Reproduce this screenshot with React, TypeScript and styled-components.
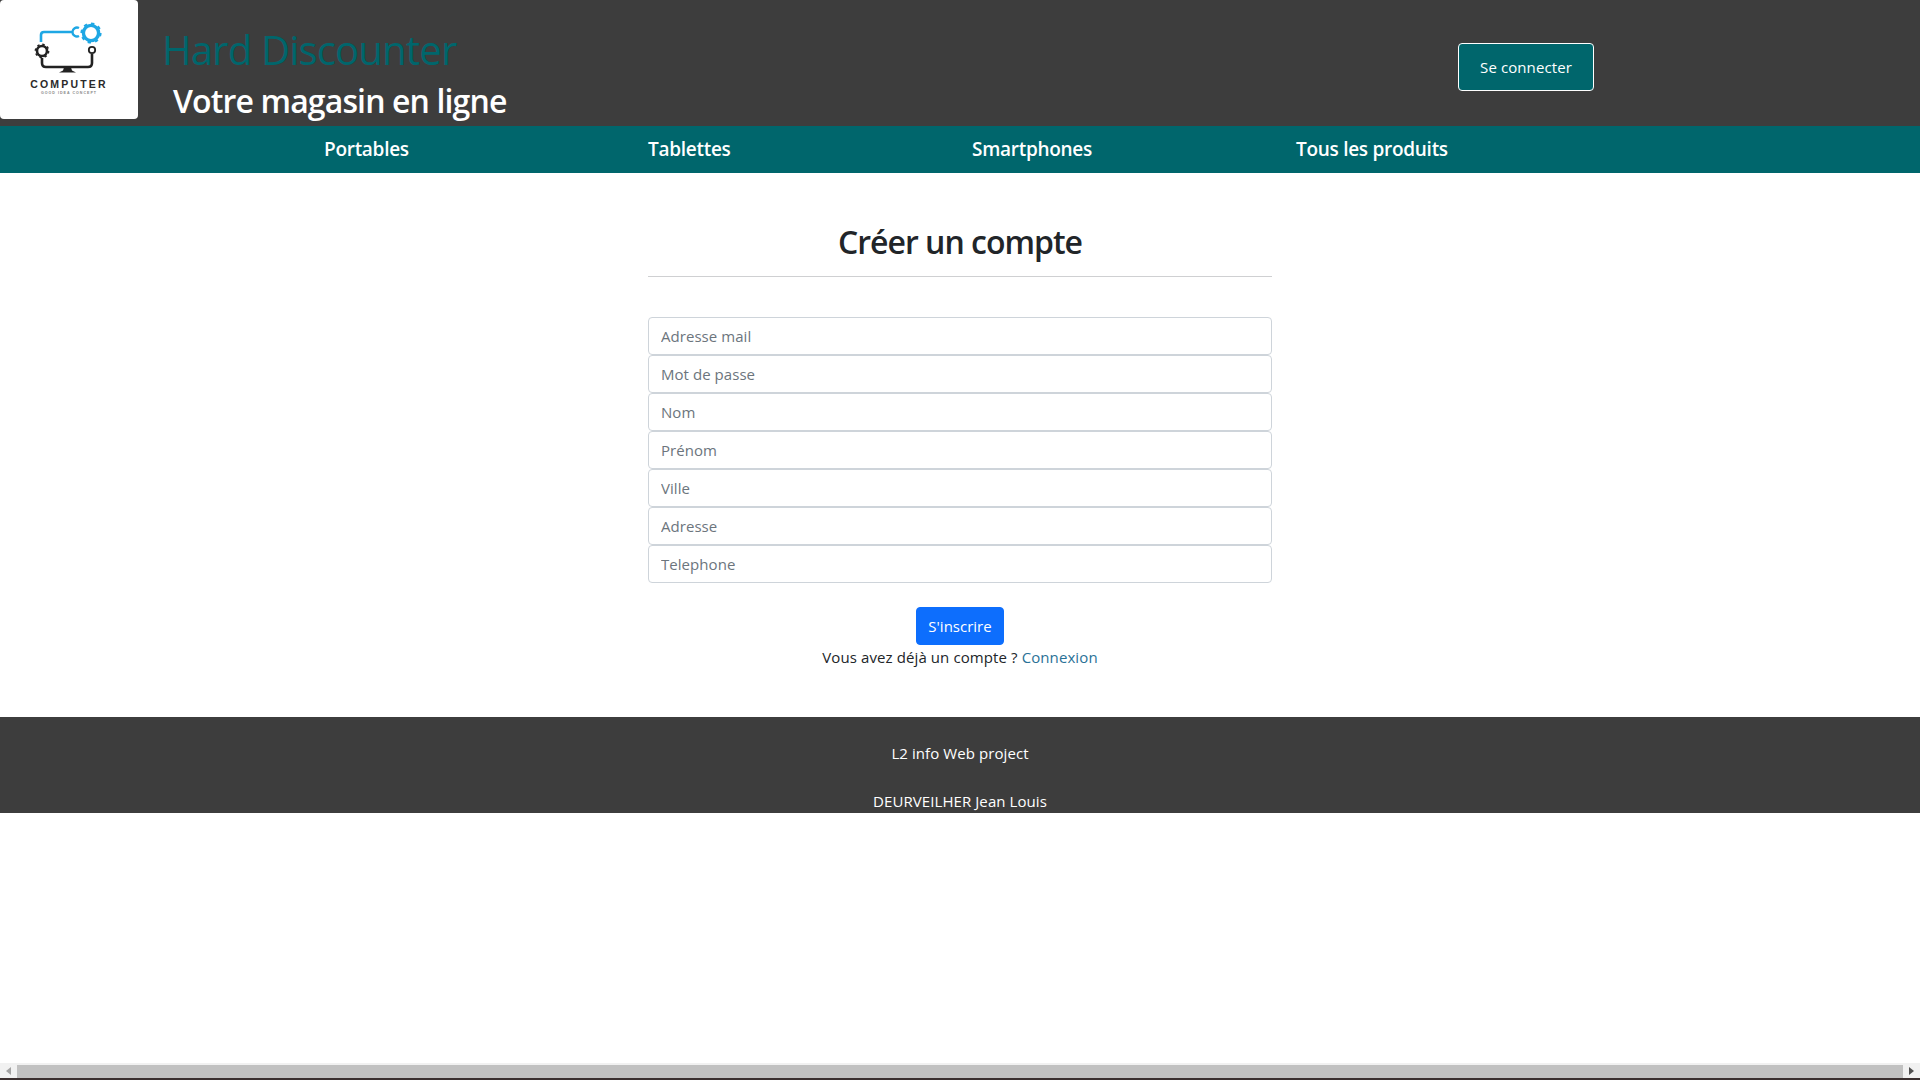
import React from "react";
import styled, { createGlobalStyle } from "styled-components";

const GlobalStyle = createGlobalStyle`
  html, body {
    margin: 0;
    padding: 0;
    height: 100%;
    overflow: hidden;
  }
  * {
    box-sizing: border-box;
  }
  body {
    background-color: #fff;
    color: #212529;
    font-family: "Open Sans", "Noto Sans", sans-serif;
    font-size: 16px;
    line-height: 24px;
  }
`;

const Page = styled.div`
  display: flex;
  flex-direction: column;
  height: 1080px;
  width: 1920px;
  overflow: hidden;
`;

const TopBar = styled.header`
  display: flex;
  align-items: flex-start;
  height: 126px;
  background-color: #3d3d3d;
`;

const LogoBox = styled.div`
  width: 138px;
  height: 119px;
  background-color: #fff;
  border-radius: 4px;
  flex-shrink: 0;
`;

const TitleBlock = styled.div`
  margin-left: 24px;
  padding-top: 26px;
`;

const SiteName = styled.h1`
  margin: 0;
  color: #00666c;
  font-size: 40px;
  line-height: 48px;
  font-weight: 400;
  letter-spacing: -0.8px;
`;

const Tagline = styled.h2`
  margin: 8px 0 0 11px;
  color: #fff;
  font-size: 32px;
  line-height: 38px;
  font-weight: 600;
  letter-spacing: -0.87px;
`;

const LoginButton = styled.button`
  margin: 43px 326px 0 auto;
  width: 136px;
  height: 48px;
  padding: 0;
  background-color: #00666c;
  color: #fff;
  border: 1px solid #fff;
  border-radius: 4px;
  font-family: inherit;
  font-size: 15px;
  letter-spacing: 0.1px;
`;

const NavBar = styled.nav`
  display: grid;
  grid-template-columns: repeat(4, 324px);
  height: 47px;
  padding: 0 0 1px 324px;
  align-items: center;
  background-color: #00666c;
`;

const NavLink = styled.a`
  color: #fff;
  font-size: 19px;
  font-weight: 600;
  letter-spacing: -0.28px;
  text-decoration: none;
`;

const Main = styled.main`
  display: flex;
  flex-direction: column;
  align-items: center;
  height: 544px;
  padding-top: 45px;
`;

const FormTitle = styled.h3`
  margin: 0;
  font-size: 32px;
  line-height: 48px;
  font-weight: 600;
  letter-spacing: -1px;
  color: #212529;
`;

const Rule = styled.hr`
  width: 624px;
  height: 1px;
  margin: 10px 0 40px;
  border: 0;
  background-color: #cfd0d2;
`;

const FieldStack = styled.div`
  display: flex;
  flex-direction: column;
  width: 624px;
`;

const Field = styled.input`
  display: block;
  width: 100%;
  height: 38px;
  padding: 6px 12px;
  border: 1px solid #ced4da;
  border-radius: 4px;
  background-color: #fff;
  font-family: inherit;
  font-size: 15px;
  letter-spacing: 0.05px;
  &::placeholder {
    color: #6c757d;
    opacity: 1;
  }
`;

const SubmitButton = styled.button`
  width: 88px;
  height: 38px;
  margin-top: 24px;
  padding: 0;
  border: 1px solid #0d6efd;
  border-radius: 4px;
  background-color: #0d6efd;
  color: #fff;
  font-family: inherit;
  font-size: 15px;
`;

const LoginHint = styled.p`
  margin: 0;
  font-size: 15px;
  line-height: 24px;
  letter-spacing: 0.1px;
`;

const HintLink = styled.a`
  color: #2a7197;
  text-decoration: none;
`;

const Footer = styled.footer`
  height: 96px;
  padding-top: 24px;
  background-color: #3d3d3d;
  color: #fff;
  text-align: center;
`;

const FooterLine = styled.p`
  margin: 0 0 24px;
  font-size: 15px;
  letter-spacing: 0.08px;
`;

const Filler = styled.div`
  flex: 1;
`;

const ScrollTrack = styled.div`
  display: flex;
  align-items: stretch;
  height: 15px;
  background-color: #f1f1f1;
`;

const ScrollArrow = styled.div`
  display: flex;
  align-items: center;
  justify-content: center;
  width: 17px;
  flex-shrink: 0;
`;

const ScrollThumb = styled.div`
  flex: 1;
  margin-top: 2px;
  background-color: #c1c1c1;
`;

const TaskEdge = styled.div`
  height: 2px;
  background-color: #3a2f2f;
`;

function Logo() {
  return (
    <svg width="138" height="119" viewBox="0 0 138 119" fill="none">
      <path d="M41 42V35q0-3 3-3H72" stroke="#1ea7e4" strokeWidth="2.6" />
      <path d="M79 28a4.5 4.5 0 1 0 0 8" stroke="#1ea7e4" strokeWidth="2.4" />
      <circle cx="91" cy="33" r="7.6" stroke="#1ea7e4" strokeWidth="3.4" />
      <circle cx="91" cy="33" r="9.6" stroke="#1ea7e4" strokeWidth="2" strokeDasharray="3.3 4.2" />
      <circle cx="42" cy="51" r="5" stroke="#222" strokeWidth="2.6" />
      <circle cx="42" cy="51" r="6.6" stroke="#222" strokeWidth="1.6" strokeDasharray="2.4 2.8" />
      <path d="M42 58V63q0 4 4 4H88q4 0 4-4V54" stroke="#222" strokeWidth="2.6" />
      <circle cx="92" cy="50" r="3.2" stroke="#222" strokeWidth="1.8" />
      <path d="M64 67.5h7l1 3 4 2H59l4-2z" fill="#222" />
      <text x="69" y="88" textAnchor="middle" fill="#2a2a2a" fontFamily="Liberation Sans, sans-serif" fontWeight="700" fontSize="10.5" letterSpacing="2.2">
        COMPUTER
      </text>
      <text x="69" y="94" textAnchor="middle" fill="#888" fontFamily="Liberation Sans, sans-serif" fontWeight="700" fontSize="3.6" letterSpacing="1">
        GOOD IDEA CONCEPT
      </text>
    </svg>
  );
}

const fields = ["Adresse mail", "Mot de passe", "Nom", "Prénom", "Ville", "Adresse", "Telephone"];
const navItems = ["Portables", "Tablettes", "Smartphones", "Tous les produits"];

export default function App() {
  return (
    <Page>
      <GlobalStyle />
      <TopBar>
        <LogoBox>
          <Logo />
        </LogoBox>
        <TitleBlock>
          <SiteName>Hard Discounter</SiteName>
          <Tagline>Votre magasin en ligne</Tagline>
        </TitleBlock>
        <LoginButton>Se connecter</LoginButton>
      </TopBar>
      <NavBar>
        {navItems.map((item) => (
          <NavLink key={item} href="#">
            {item}
          </NavLink>
        ))}
      </NavBar>
      <Main>
        <FormTitle>Créer un compte</FormTitle>
        <Rule />
        <FieldStack>
          {fields.map((field) => (
            <Field key={field} placeholder={field} />
          ))}
        </FieldStack>
        <SubmitButton>S'inscrire</SubmitButton>
        <LoginHint>
          Vous avez déjà un compte ? <HintLink href="#">Connexion</HintLink>
        </LoginHint>
      </Main>
      <Footer>
        <FooterLine>L2 info Web project</FooterLine>
        <FooterLine>DEURVEILHER Jean Louis</FooterLine>
      </Footer>
      <Filler />
      <ScrollTrack>
        <ScrollArrow>
          <svg width="5" height="8" viewBox="0 0 5 8">
            <path d="M5 0v8L0 4z" fill="#a3a3a3" />
          </svg>
        </ScrollArrow>
        <ScrollThumb />
        <ScrollArrow>
          <svg width="5" height="8" viewBox="0 0 5 8">
            <path d="M0 0v8l5-4z" fill="#505050" />
          </svg>
        </ScrollArrow>
      </ScrollTrack>
      <TaskEdge />
    </Page>
  );
}
